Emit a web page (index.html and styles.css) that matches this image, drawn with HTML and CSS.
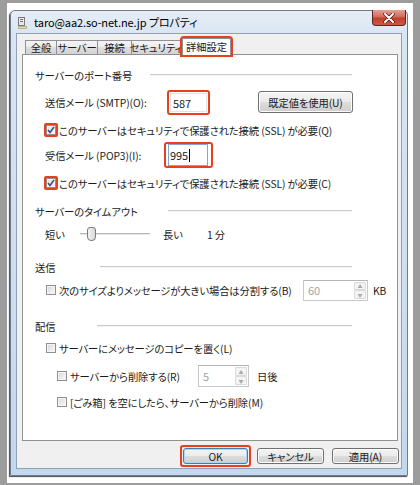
FILE: index.html
```html
<!DOCTYPE html>
<html lang="ja">
<head>
<meta charset="utf-8">
<title>プロパティ</title>
<link rel="stylesheet" href="styles.css">
</head>
<body>
<div class="shot">
  <div class="window">
    <div class="titlebar">
      <svg class="ticon" width="9" height="12" viewBox="0 0 9 12">
        <rect x="0.5" y="0.5" width="6" height="8" fill="#e8e8e8" stroke="#7a7a7a"/>
        <rect x="2" y="2" width="3" height="1" fill="#7a7a7a"/>
        <rect x="2" y="4" width="3" height="1" fill="#7a7a7a"/>
        <rect x="0" y="9" width="9" height="3" fill="#b9b28a"/>
        <rect x="1" y="10" width="7" height="1" fill="#e2dcb9"/>
      </svg>
      <span class="ttext">taro@aa2.so-net.ne.jp プロパティ</span>
      <div class="close">
        <svg width="12" height="10" viewBox="0 0 12 10">
          <path d="M2 1 L10 9 M10 1 L2 9" stroke="#5a1010" stroke-width="3.4" stroke-linecap="round"/>
          <path d="M2 1 L10 9 M10 1 L2 9" stroke="#ffffff" stroke-width="2" stroke-linecap="round"/>
        </svg>
      </div>
    </div>
    <div class="client">
      <div class="tabs">
        <div class="tab t1">全般</div>
        <div class="tab t2">サーバー</div>
        <div class="tab t3">接続</div>
        <div class="tab t4">セキュリティ</div>
        <div class="tab sel">詳細設定</div>
      </div>
      <div class="panel">
        <div class="gtitle h16"><span class="gt gt1">サーバーのポート番号</span><span class="gline"></span></div>

        <div class="row h26 m6 ind">
          <span class="lbl lsmtp">送信メール (SMTP)(O):</span>
          <span class="mark mfield"><span class="field fsmtp">587</span></span>
          <span class="btn bdef">既定値を使用(U)</span>
        </div>

        <div class="row h16 m7 cbrow">
          <span class="cbwrap marked"><span class="cb checked"><svg width="8" height="8" viewBox="0 0 8 8"><path d="M1 4 L3 6.5 L7 1" fill="none" stroke="#3b4f8e" stroke-width="1.6"/></svg></span></span>
          <span class="ctext">このサーバーはセキュリティで保護された接続 (SSL) が必要(Q)</span>
        </div>

        <div class="row h26 m4 ind">
          <span class="lbl lpop">受信メール (POP3)(I):</span>
          <span class="mark mpop"><span class="field fpop focus">995<span class="caret"></span></span></span>
        </div>

        <div class="row h16 m7 cbrow">
          <span class="cbwrap marked"><span class="cb checked"><svg width="8" height="8" viewBox="0 0 8 8"><path d="M1 4 L3 6.5 L7 1" fill="none" stroke="#3b4f8e" stroke-width="1.6"/></svg></span></span>
          <span class="ctext">このサーバーはセキュリティで保護された接続 (SSL) が必要(C)</span>
        </div>

        <div class="gtitle h16 m12"><span class="gt gt2">サーバーのタイムアウト</span><span class="gline"></span></div>

        <div class="row h16 m7 ind">
          <span class="slbl">短い</span>
          <span class="slider"><span class="track"></span><span class="thumb"></span></span>
          <span class="slbl2">長い</span>
          <span>1 分</span>
        </div>

        <div class="gtitle h16 m17"><span class="gt gt3">送信</span><span class="gline"></span></div>

        <div class="row h20 m5 cbrow">
          <span class="cbwrap"><span class="cb"></span></span>
          <span class="ctext wsplit">次のサイズよりメッセージが大きい場合は分割する(B)</span>
          <span class="spin ssplit"><span class="sval">60</span><span class="sbtns"><span class="sb">▲</span><span class="sb">▼</span></span></span>
          <span class="unit">KB</span>
        </div>

        <div class="gtitle h16 m18"><span class="gt gt4">配信</span><span class="gline"></span></div>

        <div class="row h16 m6 cbrow">
          <span class="cbwrap"><span class="cb"></span></span>
          <span class="ctext">サーバーにメッセージのコピーを置く(L)</span>
        </div>

        <div class="row h22 m9 cbrow sub">
          <span class="cbwrap"><span class="cb"></span></span>
          <span class="ctext wdel">サーバーから削除する(R)</span>
          <span class="spin sdel"><span class="sval">5</span><span class="sbtns"><span class="sb">▲</span><span class="sb">▼</span></span></span>
          <span class="unit2">日後</span>
        </div>

        <div class="row h16 m7 cbrow sub">
          <span class="cbwrap"><span class="cb"></span></span>
          <span class="ctext">[ごみ箱] を空にしたら、サーバーから削除(M)</span>
        </div>
      </div>
      <div class="buttons">
        <span class="mark mok"><span class="btn bok">OK</span></span>
        <span class="btn bcancel">キャンセル</span>
        <span class="btn bapply">適用(A)</span>
      </div>
    </div>
  </div>
</div>
</body>
</html>
```

FILE: styles.css
```css
html, body { margin: 0; padding: 0; background: #fff; }

.shot {
  width: 420px;
  height: 485px;
  box-sizing: border-box;
  border-style: solid;
  border-color: #9c9c9c;
  border-width: 3px 7px 2px 7px;
  padding: 7px 0 0 3px;
  background: #ffffff;
  font-family: "Noto Sans CJK JP", "Noto Sans", sans-serif;
  font-size: 10.3px;
  letter-spacing: -0.1px;
  font-feature-settings: "palt";
  color: #1a1a1a;
}

.window {
  width: 398px;
  height: 466px;
  box-sizing: border-box;
  border: 1px solid #6d7c8e;
  border-radius: 5px 5px 0 0;
  background: linear-gradient(to bottom, #e6eef7 0, #d8e5f2 24px, #cddef0 60%, #c2d8ee 100%);
  box-shadow: -1px 1px 1px #4a4a4a;
}

.titlebar {
  height: 22px;
  display: flex;
  align-items: center;
  padding-left: 7px;
}
.ticon { margin-top: 1px; }
.ttext {
  margin-left: 7px;
  font-size: 11px;
  color: #000;
  letter-spacing: -0.1px;
}
.close {
  margin-left: auto;
  margin-right: 1px;
  align-self: flex-start;
  margin-top: -1px;
  width: 34px;
  height: 16px;
  box-sizing: border-box;
  border: 1px solid #5e2424;
  border-top: none;
  border-radius: 0 0 4px 4px;
  background: linear-gradient(to bottom, #e4a196 0, #d26b5c 45%, #c0402c 55%, #cc5a45 100%);
  display: flex;
  align-items: center;
  justify-content: center;
}

.client {
  margin: 0 5px;
  height: 436px;
  box-sizing: border-box;
  border: 1px solid #91a2b6;
  background: #f0f0f0;
  padding: 4px 3px 0 5px;
}

.tabs {
  display: flex;
  height: 16px;
  padding-left: 3px;
  align-items: flex-start;
}
.tab {
  box-sizing: border-box;
  flex-shrink: 0;
  height: 14px;
  margin-top: 2px;
  margin-right: -1px;
  border: 1px solid #8e9196;
  border-bottom: none;
  background: linear-gradient(to bottom, #f4f4f4 0, #ebebeb 50%, #dedede 50%, #d2d2d2 100%);
  display: flex;
  align-items: center;
  justify-content: center;
  line-height: 12px;
  white-space: nowrap;
}
.t1 { width: 32px; }
.t2 { width: 42px; }
.t3 { width: 35px; }
.t4 { width: 50px; }
.tab.sel {
  position: relative;
  z-index: 1;
  width: 49px;
  height: 17px;
  margin-top: 0;
  margin-left: 2px;
  background: #ffffff;
  outline: 2px solid #e8401e;
  border-radius: 2px 2px 0 0;
}

.panel {
  height: 387px;
  box-sizing: border-box;
  border: 1px solid #8e9196;
  background: #ffffff;
  padding: 12px 45px 0 12px;
}

.gtitle {
  display: flex;
  align-items: center;
}
.gt { white-space: nowrap; flex-shrink: 0; }
.gt1 { width: 115px; }
.gt2 { width: 133px; }
.gt3 { width: 65px; }
.gt4 { width: 62px; }
.gline {
  flex: 1;
  height: 0;
  border-top: 1px solid #c4c9ce;
  border-bottom: 1px solid #f6f6f6;
}

.row {
  display: flex;
  align-items: center;
  white-space: nowrap;
}
.row > * { flex-shrink: 0; }
.ind { margin-left: 10px; }
.cbrow { margin-left: 9px; }
.cbrow.sub { margin-left: 20px; }

.h16 { height: 16px; }
.h20 { height: 20px; }
.h22 { height: 22px; }
.h26 { height: 26px; }
.m4 { margin-top: 4px; }
.m5 { margin-top: 5px; }
.m6 { margin-top: 6px; }
.m7 { margin-top: 7px; }
.m9 { margin-top: 9px; }
.m12 { margin-top: 12px; }
.m17 { margin-top: 17px; }
.m18 { margin-top: 18px; }

.lbl { display: inline-block; }
.lsmtp { width: 122px; }
.lpop { width: 119px; }

.mark {
  display: inline-flex;
  box-sizing: border-box;
  border: 2px solid #e8401e;
  border-radius: 3px;
}
.mfield { width: 43px; height: 25px; padding: 1px; }
.mpop { width: 49px; height: 26px; padding: 0 3px 0 2px; align-items: center; }

.field {
  box-sizing: border-box;
  display: flex;
  align-items: center;
  background: #fff;
  padding-left: 2px;
  font-size: 11px;
}
.fsmtp { width: 37px; height: 19px; border: 1px solid #e4e4e4; align-items: flex-start; padding-top: 1px; }
.fpop { width: 40px; height: 22px; border: 1px solid #7ea6d6; padding-left: 1px; }
.caret {
  display: inline-block;
  width: 1px;
  height: 13px;
  background: #000;
  margin-left: 1px;
}

.btn {
  box-sizing: border-box;
  display: inline-flex;
  align-items: center;
  justify-content: center;
  border: 1px solid #707070;
  border-radius: 3px;
  background: linear-gradient(to bottom, #f3f3f3 0, #ebebeb 50%, #dddddd 50%, #cfcfcf 100%);
  box-shadow: inset 0 0 0 1px #fcfcfc;
  white-space: nowrap;
}
.bdef { width: 95px; height: 22px; margin-left: 48px; }

.cbwrap {
  box-sizing: border-box;
  width: 14px;
  height: 14px;
  border: 2px solid transparent;
  border-radius: 2px;
  display: inline-flex;
}
.cbwrap.marked { border-color: #e8401e; }
.cb {
  box-sizing: border-box;
  width: 10px;
  height: 10px;
  border: 1px solid #8f8f8f;
  background: linear-gradient(135deg, #d6d6d6 0, #ececec 60%, #f8f8f8 100%);
  box-shadow: inset 0 0 0 1px #f4f4f4;
  display: flex;
  align-items: center;
  justify-content: center;
}
.cb.checked { background: linear-gradient(135deg, #e2e2e2 0, #f4f4f4 100%); }
.ctext { margin-left: 1px; }
.wsplit { display: inline-block; width: 244px; }
.wdel { display: inline-block; width: 128px; }

.spin {
  box-sizing: border-box;
  display: inline-flex;
  border: 1px solid #c8c8c8;
  border-top-color: #b5b5b5;
  background: #fff;
}
.ssplit { width: 65px; height: 21px; }
.sdel { width: 51px; height: 22px; }
.sval {
  flex: 1;
  color: #a3a3a3;
  padding-left: 4px;
  display: flex;
  align-items: center;
  font-size: 11px;
}
.sbtns {
  width: 12px;
  display: flex;
  flex-direction: column;
  padding: 1px 1px 1px 0;
}
.sb {
  flex: 1;
  border: 1px solid #dadada;
  border-radius: 1px;
  background: #f4f4f4;
  color: #a9a9a9;
  font-size: 5px;
  line-height: 1;
  display: flex;
  align-items: center;
  justify-content: center;
}
.unit { margin-left: 5px; }
.unit2 { margin-left: 8px; }

.slbl { display: inline-block; width: 35px; }
.slider {
  position: relative;
  width: 70px;
  height: 16px;
  display: inline-block;
}
.track {
  position: absolute;
  left: 0;
  right: 0;
  top: 7px;
  height: 0;
  border-top: 1px solid #b9b9b9;
  border-bottom: 1px solid #e6e6e6;
}
.thumb {
  position: absolute;
  left: 7px;
  top: 1px;
  width: 9px;
  height: 14px;
  box-sizing: border-box;
  border: 1px solid #7c7c7c;
  border-radius: 3px 3px 4px 4px;
  background: linear-gradient(to right, #f2f2f2, #d9d9d9);
}
.slbl2 { display: inline-block; width: 44px; margin-left: 13px; }

.buttons {
  display: flex;
  justify-content: flex-end;
  align-items: center;
  margin-top: 4px;
  margin-right: -1px;
}
.buttons > * { flex-shrink: 0; }
.mok { padding: 1px; height: 22px; width: 71px; }
.bok {
  width: 65px;
  height: 16px;
  border-color: #3c7fb1;
  box-shadow: inset 0 0 0 1px #a7d8f5;
}
.bcancel { width: 67px; height: 16px; margin-left: 6px; }
.bapply { width: 67px; height: 16px; margin-left: 8px; }
```
